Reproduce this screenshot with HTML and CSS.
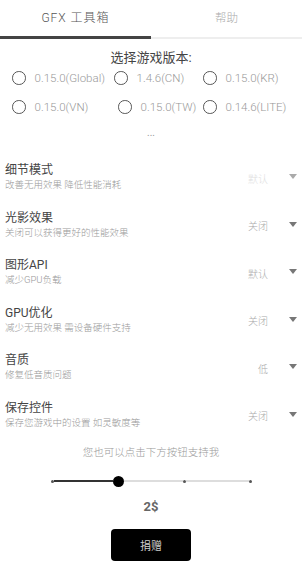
FILE: index.html
```html
<!DOCTYPE html>
<html lang="zh">
<head>
    <meta charset="UTF-8">
    <meta name="viewport" content="width=device-width, initial-scale=1.0">
    <title>GFX 工具箱</title>
    <link rel="stylesheet" href="styles.css">
</head>
<body>

    <nav class="tabs">
        <div class="tab active">GFX 工具箱</div>
        <div class="tab">帮助</div>
    </nav>

    <section class="version">
        <h2>选择游戏版本:</h2>
        <div class="radio-row">
            <label class="radio"><span class="circle"></span>0.15.0(Global)</label>
            <label class="radio"><span class="circle"></span>1.4.6(CN)</label>
            <label class="radio"><span class="circle"></span>0.15.0(KR)</label>
        </div>
        <div class="radio-row second">
            <label class="radio"><span class="circle"></span>0.15.0(VN)</label>
            <label class="radio"><span class="circle"></span>0.15.0(TW)</label>
            <label class="radio"><span class="circle"></span>0.14.6(LITE)</label>
        </div>
        <div class="more">...</div>
    </section>

    <ul class="settings">
        <li class="setting disabled">
            <div class="info">
                <h3>细节模式</h3>
                <p>改善无用效果 降低性能消耗</p>
            </div>
            <span class="value">默认</span>
            <span class="arrow"></span>
        </li>
        <li class="setting">
            <div class="info">
                <h3>光影效果</h3>
                <p>关闭可以获得更好的性能效果</p>
            </div>
            <span class="value">关闭</span>
            <span class="arrow"></span>
        </li>
        <li class="setting">
            <div class="info">
                <h3>图形API</h3>
                <p>减少GPU负载</p>
            </div>
            <span class="value">默认</span>
            <span class="arrow"></span>
        </li>
        <li class="setting">
            <div class="info">
                <h3>GPU优化</h3>
                <p>减少无用效果 需设备硬件支持</p>
            </div>
            <span class="value">关闭</span>
            <span class="arrow"></span>
        </li>
        <li class="setting">
            <div class="info">
                <h3>音质</h3>
                <p>修复低音质问题</p>
            </div>
            <span class="value">低</span>
            <span class="arrow"></span>
        </li>
        <li class="setting">
            <div class="info">
                <h3>保存控件</h3>
                <p>保存您游戏中的设置 如灵敏度等</p>
            </div>
            <span class="value">关闭</span>
            <span class="arrow"></span>
        </li>
    </ul>

    <section class="donate">
        <p class="hint">您也可以点击下方按钮支持我</p>
        <div class="slider">
            <span class="dot"></span>
            <span class="seg active"></span>
            <span class="thumb"></span>
            <span class="seg"></span>
            <span class="dot"></span>
            <span class="seg long"></span>
            <span class="dot"></span>
        </div>
        <div class="amount">2$</div>
        <button class="donate-btn">捐赠</button>
    </section>

</body>
</html>
```

FILE: styles.css
```css
body {
    margin: 0;
    padding: 0;
    background: #fff;
    font-family: Roboto, "Noto Sans CJK SC", sans-serif;
    color: #444;
}
.tabs {
    display: flex;
    height: 37px;
    border-bottom: 2px solid #eee;
}
.tab {
    flex: 1;
    text-align: center;
    line-height: 36px;
    font-size: 11.5px;
    font-weight: 300;
    color: #aaa;
}
.tab.active {
    color: #555;
    font-size: 12px;
    letter-spacing: 1px;
    border-bottom: 3px solid #444;
    margin-bottom: -2px;
}
.version h2 {
    margin: 11px 0 0;
    font-size: 13px;
    font-weight: normal;
    line-height: 16px;
    text-align: center;
    color: #444;
}
.radio-row {
    display: grid;
    grid-template-columns: 102px 89px auto;
    padding-left: 12px;
    height: 24px;
    align-items: center;
}
.radio-row.second {
    margin-top: 5px;
    grid-template-columns: 106px 85px auto;
}
.radio {
    display: flex;
    align-items: center;
    font-size: 11.5px;
    font-weight: 300;
    color: #999;
    white-space: nowrap;
}
.circle {
    flex-shrink: 0;
    box-sizing: border-box;
    width: 13.5px;
    height: 13.5px;
    border: 1.8px solid #555;
    border-radius: 50%;
    margin-right: 9px;
}
.more {
    margin-top: 7px;
    text-align: center;
    font-size: 10px;
    line-height: 14px;
    color: #999;
}
.settings {
    list-style: none;
    margin: 13px 0 0;
    padding: 0;
}
.setting {
    display: flex;
    align-items: center;
    height: 47.5px;
    padding: 0 5px 0 5px;
}
.info {
    flex: 1;
}
.info h3 {
    margin: 0;
    font-size: 12px;
    font-weight: normal;
    line-height: 16px;
    color: #444;
}
.info p {
    margin: 0;
    font-size: 9.5px;
    font-weight: 300;
    line-height: 13px;
    color: #999;
}
.value {
    font-size: 10px;
    font-weight: 300;
    color: #aaa;
    margin-right: 21px;
    margin-top: 3px;
}
.arrow {
    width: 0;
    height: 0;
    border-left: 4.5px solid transparent;
    border-right: 4.5px solid transparent;
    border-top: 5px solid #777;
}
.disabled .value {
    color: #ddd;
}
.disabled .arrow {
    border-top-color: #aaa;
}
.donate {
    text-align: center;
}
.hint {
    margin: 8px 0 0;
    font-size: 10.5px;
    font-weight: 300;
    line-height: 14px;
    color: #999;
}
.slider {
    display: flex;
    align-items: center;
    width: 201px;
    height: 20px;
    margin: 11px 0 0 51px;
}
.dot {
    width: 3px;
    height: 3px;
    border-radius: 50%;
    background: #555;
}
.seg {
    width: 59px;
    height: 1.5px;
    background: #ddd;
}
.seg.active {
    height: 2px;
    background: #333;
}
.seg.long {
    width: 63px;
}
.thumb {
    width: 11px;
    height: 11px;
    border-radius: 50%;
    background: #000;
}
.amount {
    margin-top: 8px;
    font-size: 13px;
    font-weight: bold;
    line-height: 16px;
    color: #666;
}
.donate-btn {
    margin-top: 14px;
    width: 80px;
    height: 32px;
    background: #000;
    color: #ccc;
    border: none;
    border-radius: 4px;
    font-family: "Noto Sans CJK SC", sans-serif;
    font-size: 11px;
}
```
